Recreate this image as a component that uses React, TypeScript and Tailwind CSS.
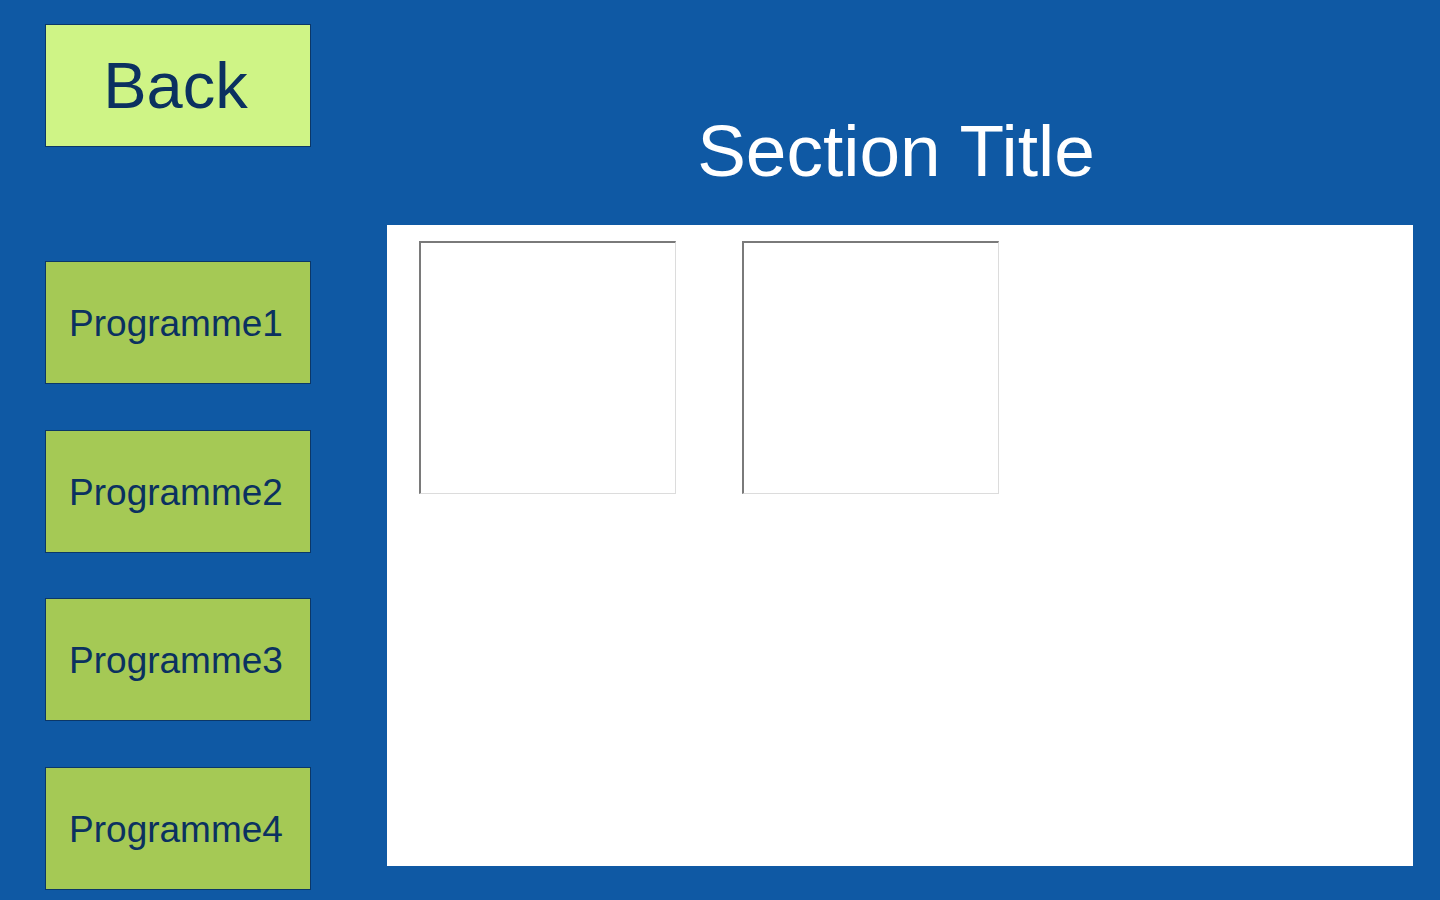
const programmes = ['Programme1', 'Programme2', 'Programme3', 'Programme4']

export default function App() {
  return (
    <div
      className="flex h-[900px] w-[1440px] overflow-hidden bg-[#0f59a4]"
      style={{ fontFamily: '"Liberation Sans", Arial, sans-serif' }}
    >
      {/* left nav */}
      <div className="flex w-[311px] shrink-0 flex-col pl-[45px] pt-[24px]">
        <button className="flex h-[123px] w-[266px] items-center justify-center border border-[#0b3768] bg-[#cff486] pr-[5px] text-[65px] leading-none text-[#0b3160]">
          Back
        </button>
        <div className="mt-[114px] flex flex-col gap-[45.7px]">
          {programmes.map((p) => (
            <button
              key={p}
              className="flex h-[123px] w-[266px] items-center justify-center border border-[#0b3768] bg-[#a5c955] pr-[4px] pt-[2px] text-[37px] leading-none text-[#0b3160]"
            >
              {p}
            </button>
          ))}
        </div>
      </div>

      {/* main */}
      <div className="ml-[76px] flex w-[1026px] flex-col">
        <div className="flex h-[225px] items-center justify-center pt-[76px] pr-[8px]">
          <h1 className="text-[73px] leading-none text-white">Section Title</h1>
        </div>
        <div className="flex h-[641px] gap-[66px] bg-white pl-[32px] pt-[16px]">
          <div className="h-[253px] w-[257px] border-t-2 border-l-2 border-r border-b border-t-[#7a7a7a] border-l-[#7a7a7a] border-r-[#dcdcdc] border-b-[#dcdcdc] bg-white" />
          <div className="h-[253px] w-[257px] border-t-2 border-l-2 border-r border-b border-t-[#7a7a7a] border-l-[#7a7a7a] border-r-[#dcdcdc] border-b-[#dcdcdc] bg-white" />
        </div>
      </div>
    </div>
  )
}
